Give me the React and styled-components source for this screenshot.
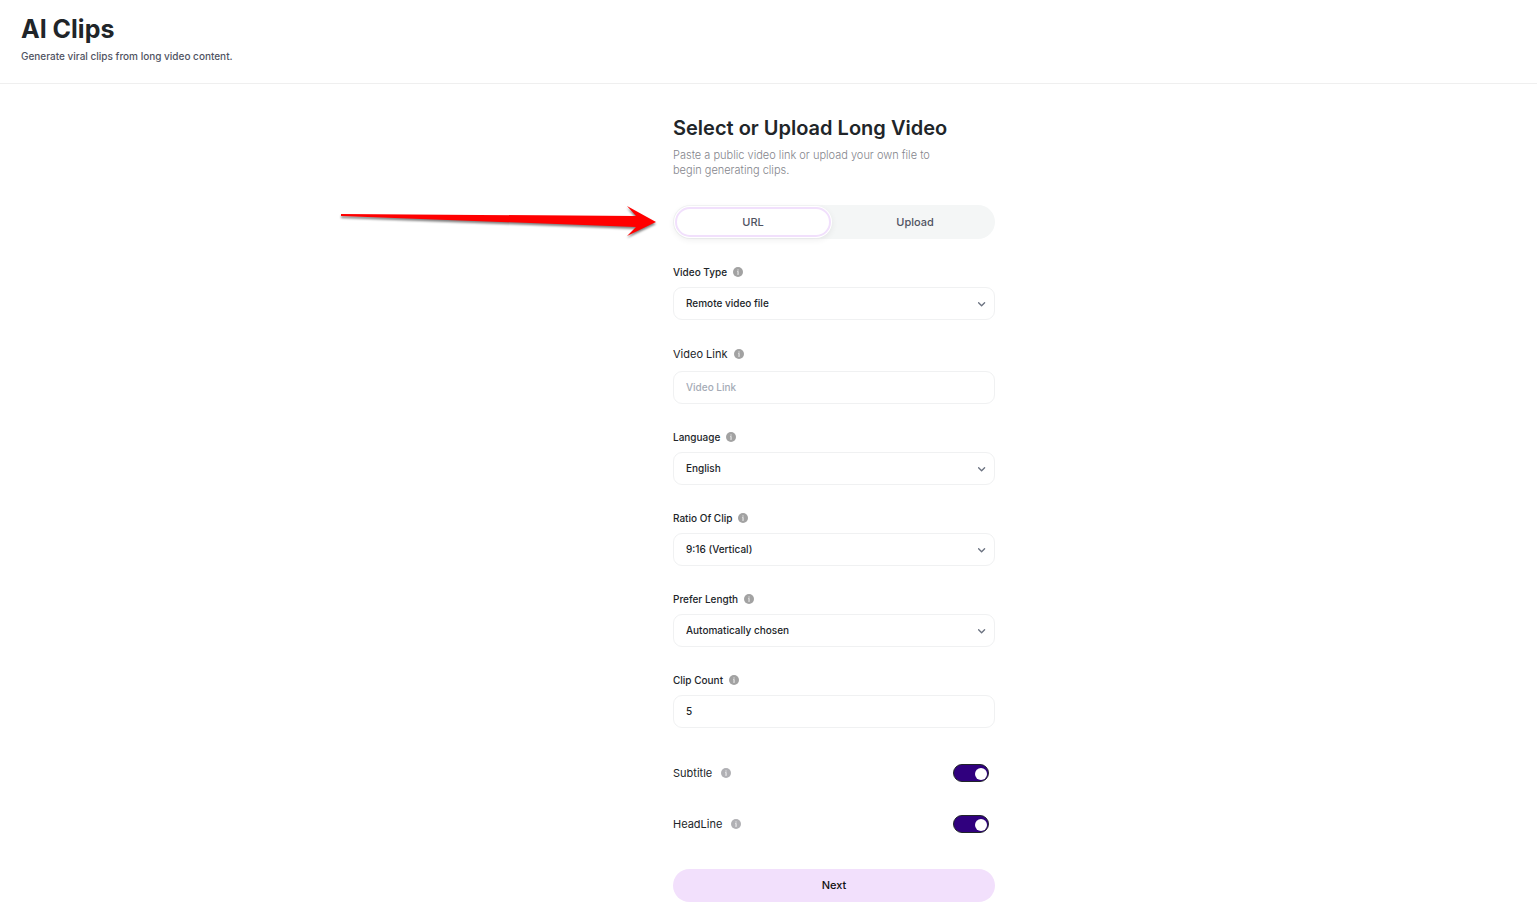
import React, { useState } from 'react';
import styled, { createGlobalStyle } from 'styled-components';

const GlobalStyle = createGlobalStyle`
  * {
    box-sizing: border-box;
  }

  body {
    margin: 0;
    background: #ffffff;
    color: #212529;
    font-family: Inter, 'Liberation Sans', sans-serif;
    font-size: 10px;
  }

  button, input, select {
    font-family: inherit;
  }
`;

const Header = styled.header`
  padding: 12px 21px 19px;
  border-bottom: 1px solid #efefef;
`;

const PageTitle = styled.h1`
  margin: 0 0 2px;
  font-size: 25px;
  line-height: 34px;
  font-weight: 700;
`;

const PageText = styled.p`
  margin: 0;
  color: #4f5362;
  font-size: 10px;
  line-height: 16px;
  font-weight: 500;
`;

const Main = styled.main`
  display: flex;
  justify-content: center;
  padding: 32px 0 17px 131px;
`;

const Form = styled.form`
  width: 100%;
  max-width: 322px;
`;

const FormTitle = styled.h2`
  margin: 0 0 8px;
  font-size: 20px;
  line-height: 24px;
  font-weight: 600;
  white-space: nowrap;
`;

const FormText = styled.p`
  max-width: 270px;
  margin: 0 0 27px;
  color: #84858c;
  font-size: 11px;
  line-height: 15px;
  font-weight: 300;
`;

const TabArea = styled.div`
  position: relative;
  margin-bottom: 25px;
`;

const Tabs = styled.div`
  display: grid;
  grid-template-columns: 1fr 1fr;
  gap: 6px;
  padding: 2px;
  border-radius: 17px;
  background: #f4f6f6;
`;

const Tab = styled.button`
  height: 30px;
  padding: 0;
  border: 2px solid ${(props) => (props.$active ? '#f1e0fc' : 'transparent')};
  border-radius: 15px;
  background: ${(props) => (props.$active ? '#ffffff' : 'transparent')};
  box-shadow: ${(props) =>
    props.$active ? '0 0 0 1px #ffffff, 0 2px 6px 1px rgba(0, 0, 0, 0.07)' : 'none'};
  color: #4f5362;
  font-size: 11px;
  font-weight: 500;
  cursor: pointer;
`;

const Arrow = styled.svg`
  position: absolute;
  right: 100%;
  top: 0;
  margin-right: 16px;
  overflow: visible;
  pointer-events: none;
  filter: drop-shadow(0 2px 1px rgba(0, 0, 0, 0.5));
`;

const Field = styled.div`
  margin-bottom: 25px;
`;

const LabelRow = styled.div`
  display: flex;
  align-items: center;
  gap: 6px;
  height: ${(props) => (props.$large ? '18px' : '16px')};
  margin-bottom: ${(props) => (props.$large ? '8px' : '7px')};
`;

const Label = styled.label`
  font-size: ${(props) => (props.$large ? '11px' : '10px')};
  font-weight: ${(props) => (props.$large ? 400 : 500)};
`;

const Input = styled.input`
  display: block;
  width: 100%;
  height: 33px;
  padding: 0 12px 1px;
  border: 1px solid #f0f1f2;
  border-radius: 9px;
  background: #ffffff;
  color: #212529;
  font-size: 10px;
  font-weight: 500;

  &::placeholder {
    color: #a5abb6;
    opacity: 1;
  }
`;

const SelectBox = styled.div`
  position: relative;
`;

const Select = styled(Input).attrs({ as: 'select' })`
  appearance: none;
`;

const Chevron = styled.svg`
  position: absolute;
  right: 9px;
  top: 13px;
  pointer-events: none;
`;

const SwitchRow = styled.div`
  display: flex;
  align-items: center;
  justify-content: space-between;
  height: 18px;
  margin-bottom: 33px;
  padding-right: 6px;
`;

const SwitchLabel = styled.div`
  display: flex;
  align-items: center;
  gap: 9px;
`;

const Switches = styled.div`
  padding-top: 11px;
  margin-bottom: 36px;

  ${SwitchRow}:last-child {
    margin-bottom: 0;
  }
`;

const Switch = styled.input`
  appearance: none;
  display: flex;
  align-items: center;
  justify-content: flex-start;
  width: 36px;
  height: 18px;
  margin: 0;
  padding: 1px 1px 0;
  border: 1px solid #212529;
  border-radius: 9px;
  background: #b5b6ba;
  cursor: pointer;

  &:checked {
    justify-content: flex-end;
    background: #30007e;
  }

  &::before {
    content: '';
    width: 12px;
    height: 12px;
    border-radius: 50%;
    background: #ffffff;
  }
`;

const NextButton = styled.button`
  display: block;
  width: 100%;
  height: 33px;
  padding: 0 12px 1px;
  border: 0;
  border-radius: 17px;
  background: #f2e0fc;
  color: #111111;
  font-size: 11px;
  font-weight: 500;
  cursor: pointer;
`;

const InfoIcon = ({ color = '#a2a2a2' }) => (
  <svg width="10" height="10" viewBox="0 0 10 10" aria-hidden="true">
    <circle cx="5" cy="5" r="5" fill={color} />
    <path d="M4.4 2.4h1.2v1.1H4.4zM4 4.3h1.6v2.6H6v.7H4v-.7h.5V5H4z" fill="#ffffff" fillOpacity="0.8" />
  </svg>
);

const SelectField = ({ id, label, options }) => (
  <Field>
    <LabelRow>
      <Label htmlFor={id}>{label}</Label>
      <InfoIcon />
    </LabelRow>
    <SelectBox>
      <Select id={id}>
        {options.map((option) => (
          <option key={option}>{option}</option>
        ))}
      </Select>
      <Chevron width="8" height="8" viewBox="0 0 8 8" fill="none">
        <path d="M.6 2.7 3.6 5.8 6.6 2.7" stroke="#6b7280" strokeWidth="1.3" strokeLinecap="round" strokeLinejoin="round" />
      </Chevron>
    </SelectBox>
  </Field>
);

const SwitchField = ({ id, label }) => (
  <SwitchRow>
    <SwitchLabel>
      <Label $large htmlFor={id}>{label}</Label>
      <InfoIcon color="#b0b0b4" />
    </SwitchLabel>
    <Switch id={id} type="checkbox" role="switch" defaultChecked />
  </SwitchRow>
);

const App = () => {
  const [tab, setTab] = useState('URL');

  return (
    <>
      <GlobalStyle />
      <Header>
        <PageTitle>AI Clips</PageTitle>
        <PageText>Generate viral clips from long video content.</PageText>
      </Header>
      <Main>
        <Form onSubmit={(event) => event.preventDefault()}>
          <FormTitle>Select or Upload Long Video</FormTitle>
          <FormText>Paste a public video link or upload your own file to begin generating clips.</FormText>
          <TabArea>
            <Arrow width="316" height="34" viewBox="0 0 316 34" aria-hidden="true">
              <path d="M0 9 L295 11 L286 1 L315 17 L286 31 L295 22 L0 11 Z" fill="#ff0000" />
            </Arrow>
            <Tabs>
              {['URL', 'Upload'].map((name) => (
                <Tab key={name} type="button" $active={tab === name} onClick={() => setTab(name)}>
                  {name}
                </Tab>
              ))}
            </Tabs>
          </TabArea>
          <SelectField id="video-type" label="Video Type" options={['Remote video file']} />
          <Field>
            <LabelRow $large>
              <Label $large htmlFor="video-link">Video Link</Label>
              <InfoIcon />
            </LabelRow>
            <Input id="video-link" type="text" placeholder="Video Link" />
          </Field>
          <SelectField id="language" label="Language" options={['English']} />
          <SelectField id="ratio" label="Ratio Of Clip" options={['9:16 (Vertical)']} />
          <SelectField id="length" label="Prefer Length" options={['Automatically chosen']} />
          <Field>
            <LabelRow>
              <Label htmlFor="clip-count">Clip Count</Label>
              <InfoIcon />
            </LabelRow>
            <Input id="clip-count" type="text" inputMode="numeric" defaultValue="5" />
          </Field>
          <Switches>
            <SwitchField id="subtitle" label="Subtitle" />
            <SwitchField id="headline" label="HeadLine" />
          </Switches>
          <NextButton type="submit">Next</NextButton>
        </Form>
      </Main>
    </>
  );
};

export default App;
